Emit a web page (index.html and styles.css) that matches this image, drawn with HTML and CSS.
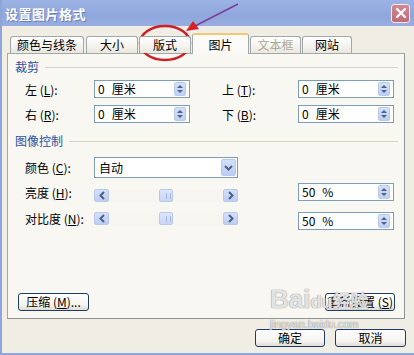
FILE: index.html
```html
<!DOCTYPE html>
<html lang="zh-CN">
<head>
    <meta charset="UTF-8">
    <meta name="viewport" content="width=device-width, initial-scale=1.0">
    <title>设置图片格式</title>
    <link rel="stylesheet" href="styles.css">
</head>
<body>
    <div class="window">
        <div class="titlebar">
            <span class="title">设置图片格式</span>
            <span class="close-btn">
                <svg width="12" height="12" viewBox="0 0 12 12"><path d="M2 2 L10 10 M10 2 L2 10" stroke="#fff" stroke-width="2.2" stroke-linecap="round"/></svg>
            </span>
        </div>

        <div class="dialog-body">
            <div class="tabs">
                <div class="tab tab-w74">颜色与线条</div>
                <div class="tab tab-w52">大小</div>
                <div class="tab tab-w52">版式</div>
                <div class="tab tab-active">图片</div>
                <div class="tab tab-w51 tab-disabled">文本框</div>
                <div class="tab tab-w50">网站</div>
            </div>

            <div class="panel">
                <div class="group-head">
                    <span class="group-label">裁剪</span>
                    <span class="group-rule"></span>
                </div>

                <div class="crop-grid">
                    <label class="field-label">左 (<u>L</u>):</label>
                    <div class="spin-input"><span class="value">0<span class="unit">厘米</span></span><span class="spinner"><i class="up"></i><i class="down"></i></span></div>
                    <span></span>
                    <label class="field-label">上 (<u>T</u>):</label>
                    <div class="spin-input"><span class="value">0<span class="unit">厘米</span></span><span class="spinner"><i class="up"></i><i class="down"></i></span></div>

                    <label class="field-label">右 (<u>R</u>):</label>
                    <div class="spin-input"><span class="value">0<span class="unit">厘米</span></span><span class="spinner"><i class="up"></i><i class="down"></i></span></div>
                    <span></span>
                    <label class="field-label">下 (<u>B</u>):</label>
                    <div class="spin-input"><span class="value">0<span class="unit">厘米</span></span><span class="spinner"><i class="up"></i><i class="down"></i></span></div>
                </div>

                <div class="group-head group-head-2">
                    <span class="group-label">图像控制</span>
                    <span class="group-rule"></span>
                </div>

                <div class="image-grid">
                    <label class="field-label">颜色 (<u>C</u>):</label>
                    <div class="combo">
                        <span class="value">自动</span>
                        <span class="combo-btn">
                            <svg width="9" height="6" viewBox="0 0 9 6"><path d="M1 1 L4.5 4.5 L8 1" fill="none" stroke="#4d6185" stroke-width="2"/></svg>
                        </span>
                    </div>
                    <span></span>
                    <span></span>

                    <label class="field-label row-bright">亮度 (<u>H</u>):</label>
                    <div class="scrollbar row-bright">
                        <span class="scroll-btn">
                            <svg width="6" height="9" viewBox="0 0 6 9"><path d="M5 1 L1.5 4.5 L5 8" fill="none" stroke="#4d6185" stroke-width="2"/></svg>
                        </span>
                        <span class="track"><span class="thumb"></span></span>
                        <span class="scroll-btn">
                            <svg width="6" height="9" viewBox="0 0 6 9"><path d="M1 1 L4.5 4.5 L1 8" fill="none" stroke="#4d6185" stroke-width="2"/></svg>
                        </span>
                    </div>
                    <span></span>
                    <div class="spin-input row-bright"><span class="value">50<span class="unit">%</span></span><span class="spinner"><i class="up"></i><i class="down"></i></span></div>

                    <label class="field-label row-contrast">对比度 (<u>N</u>):</label>
                    <div class="scrollbar row-contrast">
                        <span class="scroll-btn">
                            <svg width="6" height="9" viewBox="0 0 6 9"><path d="M5 1 L1.5 4.5 L5 8" fill="none" stroke="#4d6185" stroke-width="2"/></svg>
                        </span>
                        <span class="track"><span class="thumb"></span></span>
                        <span class="scroll-btn">
                            <svg width="6" height="9" viewBox="0 0 6 9"><path d="M1 1 L4.5 4.5 L1 8" fill="none" stroke="#4d6185" stroke-width="2"/></svg>
                        </span>
                    </div>
                    <span></span>
                    <div class="spin-input row-contrast"><span class="value">50<span class="unit">%</span></span><span class="spinner"><i class="up"></i><i class="down"></i></span></div>
                </div>

                <div class="panel-foot">
                    <button class="xp-btn btn-compress">压缩 (<u>M</u>)...</button>
                    <button class="xp-btn btn-reset">重新设置 (<u>S</u>)</button>
                </div>
            </div>

            <div class="actions">
                <button class="xp-btn btn-ok">确定</button>
                <button class="xp-btn btn-cancel">取消</button>
            </div>
        </div>

        <!-- annotation drawn over the screenshot -->
        <svg class="annotation" width="414" height="80" viewBox="0 0 414 80">
            <ellipse cx="165" cy="43" rx="25" ry="17" fill="none" stroke="#cc1f26" stroke-width="2.5"/>
            <line x1="238" y1="4" x2="195" y2="26" stroke="#7b3f9a" stroke-width="1.5"/>
            <polygon points="186,31 193,21 199,29" fill="#d8202a"/>
        </svg>

        <div class="watermark">
            <span class="wm-logo">Bai<span class="wm-du">du</span><span class="wm-jy">经验</span></span>
            <span class="wm-url">jingyan.baidu.com</span>
        </div>
    </div>
</body>
</html>
```

FILE: styles.css
```css
body {
    margin: 0;
    padding: 0;
    background: #fff;
}

.window {
    position: relative;
    width: 414px;
    height: 355px;
    box-sizing: border-box;
    background-color: #efede4;
    border-left: 2px solid #8ea5da;
    border-bottom: 2px solid #8ea5da;
    font-family: "Noto Sans CJK SC", "Liberation Sans", sans-serif;
    font-size: 12px;
    color: #000;
    overflow: hidden;
}

u {
    text-decoration: underline;
}

/* title bar */
.titlebar {
    height: 26px;
    display: flex;
    align-items: center;
    justify-content: space-between;
    padding: 0 4px 0 3px;
    background: linear-gradient(#9bb2e4, #8fa7dc 60%, #98aee0);
}

.title {
    color: #fff;
    font-weight: bold;
    font-size: 13px;
    letter-spacing: 0.5px;
    text-shadow: 1px 1px 0 #6d83b8;
}

.close-btn {
    width: 19px;
    height: 19px;
    box-sizing: border-box;
    display: flex;
    align-items: center;
    justify-content: center;
    border: 1px solid #f2e6ea;
    border-radius: 3px;
    background: linear-gradient(#d08890, #c06b76);
}

/* body */
.dialog-body {
    padding: 7px 9px 0 5px;
}

.tabs {
    display: flex;
    align-items: flex-end;
    height: 20px;
    margin-left: 3px;
    position: relative;
    z-index: 1;
}

.tab {
    height: 17px;
    box-sizing: border-box;
    margin-right: 1px;
    border: 1px solid #a0a8ab;
    border-bottom: none;
    border-radius: 3px 3px 0 0;
    background: linear-gradient(#fff, #f3f2ec 60%, #e9e7de);
    text-align: center;
    line-height: 16px;
    font-size: 12px;
}

.tab-w74 { width: 74px; margin-right: 2px; }
.tab-w52 { width: 52px; }
.tab-w51 { width: 51px; }
.tab-w50 { width: 50px; }

.tab-active {
    width: 57px;
    height: 21px;
    margin-bottom: -1px;
    line-height: 19px;
    background: #fbfaf7;
    border-top: 2px solid #f0c878;
}

.tab-disabled {
    color: #aca899;
}

.panel {
    height: 266px;
    box-sizing: border-box;
    display: flex;
    flex-direction: column;
    border: 1px solid #a0a8ab;
    border-right-color: #8d9496;
    border-bottom-color: #8d9496;
    background: #f8f7f2;
    padding-top: 6px;
}

.group-head {
    display: flex;
    align-items: center;
    height: 14px;
    padding-left: 7px;
    padding-right: 6px;
}

.group-label {
    color: #2b52a3;
    line-height: 14px;
}

.group-rule {
    flex: 1;
    height: 1px;
    margin-left: 6px;
    background: #d6d3c6;
}

.group-head-2 {
    margin-top: 11px;
}

.crop-grid {
    display: grid;
    grid-template-columns: 69px 96px 32px 76px 96px;
    grid-auto-rows: 18px;
    row-gap: 7px;
    padding-left: 17px;
    margin-top: 6px;
}

.image-grid {
    display: grid;
    grid-template-columns: 69px 144px 60px 96px;
    grid-template-rows: 21px 18px 18px;
    row-gap: 5px;
    padding-left: 17px;
    margin-top: 9px;
}

.row-contrast {
    margin-top: 6px;
}

.field-label {
    display: flex;
    align-items: center;
    white-space: nowrap;
}

.spin-input {
    display: flex;
    align-items: center;
    box-sizing: border-box;
    height: 18px;
    border: 1px solid #7f9db9;
    background: #fff;
    padding-left: 3px;
}

.value {
    flex: 1;
    line-height: 16px;
}

.unit {
    margin-left: 7px;
}

.spinner {
    width: 12px;
    height: 14px;
    margin-right: 3px;
    box-sizing: border-box;
    border: 1px solid #b9c9ec;
    border-radius: 2px;
    background: linear-gradient(#d4e0fa, #bfcff3);
    display: flex;
    flex-direction: column;
    align-items: center;
    justify-content: center;
    gap: 2px;
}

.spinner i {
    width: 0;
    height: 0;
    border-left: 3px solid transparent;
    border-right: 3px solid transparent;
}

.spinner .up {
    border-bottom: 3px solid #4d6185;
}

.spinner .down {
    border-top: 3px solid #4d6185;
}

.combo {
    display: flex;
    align-items: center;
    box-sizing: border-box;
    height: 21px;
    border: 1px solid #7f9db9;
    background: #fff;
    padding-left: 4px;
}

.combo-btn {
    width: 15px;
    height: 17px;
    margin-right: 1px;
    box-sizing: border-box;
    border: 1px solid #b9c9ec;
    border-radius: 2px;
    background: linear-gradient(#d4e0fa, #bccdf3);
    display: flex;
    align-items: center;
    justify-content: center;
}

.scrollbar {
    display: flex;
    align-self: end;
    height: 13px;
    margin-bottom: -1px;
    background: #f6f5f0;
}

.scroll-btn {
    width: 15px;
    height: 13px;
    box-sizing: border-box;
    border: 1px solid #b9c9ec;
    border-radius: 2px;
    background: linear-gradient(#d4e0fa, #bccdf3);
    display: flex;
    align-items: center;
    justify-content: center;
}

.track {
    flex: 1;
    display: flex;
    justify-content: center;
}

.thumb {
    width: 14px;
    height: 13px;
    box-sizing: border-box;
    border: 1px solid #b9c9ec;
    border-radius: 2px;
    background:
        repeating-linear-gradient(90deg, transparent 0 3px, #a9b9de 3px 4px) 3px 3px / 8px 6px no-repeat,
        linear-gradient(#dce6fb, #c8d6f5);
}

.panel-foot {
    margin-top: auto;
    display: flex;
    justify-content: space-between;
    padding: 0 9px 7px 10px;
}

.xp-btn {
    height: 18px;
    box-sizing: border-box;
    padding: 0;
    border: 1px solid #1d3c68;
    border-radius: 3px;
    background: linear-gradient(#fff, #f4f3ee 70%, #dedcd2);
    font-family: "Noto Sans CJK SC", "Liberation Sans", sans-serif;
    font-size: 12px;
    line-height: 16px;
    color: #000;
}

.btn-compress { width: 71px; }
.btn-reset { width: 70px; }

.actions {
    display: flex;
    justify-content: flex-end;
    gap: 10px;
    margin-top: 10px;
    margin-right: -1px;
}

.btn-ok { width: 70px; }
.btn-cancel { width: 71px; }

/* overlays */
.annotation {
    position: absolute;
    left: -2px;
    top: 0;
    pointer-events: none;
}

.watermark {
    position: absolute;
    left: 268px;
    top: 282px;
    display: flex;
    flex-direction: column;
    pointer-events: none;
    color: rgba(255, 255, 255, 0.8);
    text-shadow: 0 0 1px rgba(110, 110, 110, 0.7), 0 0 1px rgba(110, 110, 110, 0.7);
}

.wm-logo {
    font-family: "Liberation Sans", sans-serif;
    font-weight: bold;
    font-size: 26px;
    line-height: 34px;
}

.wm-du {
    font-size: 18px;
}

.wm-jy {
    font-family: "Noto Sans CJK SC", sans-serif;
    font-size: 18px;
}

.wm-url {
    font-family: "Liberation Sans", sans-serif;
    font-size: 11px;
    line-height: 11px;
}
```
